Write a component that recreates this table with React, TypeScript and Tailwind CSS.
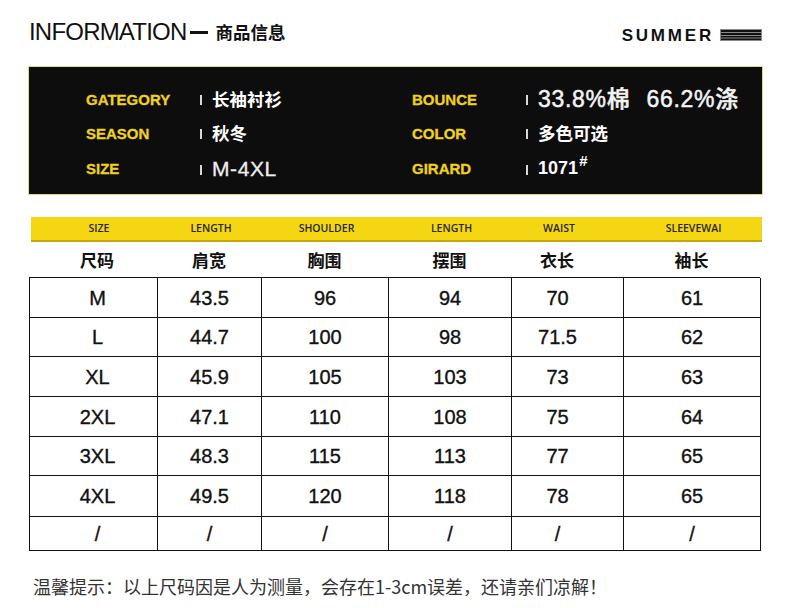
import React from "react";

const sans = '"Liberation Sans", "Noto Sans CJK SC", Arial, sans-serif';
const cjk = '"Noto Sans CJK SC", "Liberation Sans", sans-serif';

const cols = "grid-cols-[128px_104px_127px_123px_112px_137px]";

const headEn = ["SIZE", "LENGTH", "SHOULDER", "LENGTH", "WAIST", "SLEEVEWAI"];
const headZh = ["尺码", "肩宽", "胸围", "摆围", "衣长", "袖长"];
const rows: { h: number; v: string[] }[] = [
  { h: 40, v: ["M", "43.5", "96", "94", "70", "61"] },
  { h: 39, v: ["L", "44.7", "100", "98", "71.5", "62"] },
  { h: 40, v: ["XL", "45.9", "105", "103", "73", "63"] },
  { h: 40, v: ["2XL", "47.1", "110", "108", "75", "64"] },
  { h: 39, v: ["3XL", "48.3", "115", "113", "77", "65"] },
  { h: 41, v: ["4XL", "49.5", "120", "118", "78", "65"] },
  { h: 34, v: ["/", "/", "/", "/", "/", "/"] },
];

const shift = ["pl-[8px]", "", "", "", "pr-[20px]", ""];

function Sep() {
  return (
    <div className="flex items-center h-full">
      <div className="w-[2px] h-[10px] bg-[#d8d8d8] mt-[2px]" />
    </div>
  );
}

function Label({ children }: { children: React.ReactNode }) {
  return (
    <div
      className="text-[15px] font-bold text-[#efd11e] leading-none flex items-center h-full [-webkit-text-stroke:0.3px_#efd11e]"
      style={{ fontFamily: sans }}
    >
      {children}
    </div>
  );
}

export default function App() {
  return (
    <div className="w-[790px] h-[608px] bg-white overflow-hidden" style={{ fontFamily: sans }}>
      {/* header */}
      <div className="pt-[20px] flex items-start justify-between pl-[29px] pr-[28px] h-[46px]">
        <div className="flex items-center h-[24px]">
          <span
            className="text-[24px] leading-[24px] tracking-[-0.8px] text-[#111]"
            style={{ fontFamily: sans }}
          >
            INFORMATION
          </span>
          <span className="inline-block w-[18px] h-[3px] bg-[#111] ml-[4px] mt-[1px]" />
          <span
            className="ml-[7px] text-[17.5px] font-bold leading-none text-[#111]"
            style={{ fontFamily: cjk }}
          >
            商品信息
          </span>
        </div>
        <div className="flex items-center h-[24px] mt-[3px]">
          <span className="text-[17px] font-bold tracking-[2.8px] leading-none text-[#111]">
            SUMMER
          </span>
          <svg width="42" height="12" viewBox="0 0 42 12" className="ml-[6px]">
            <rect x="0" y="0" width="42" height="12" fill="#8a8a8a" />
            <rect x="1" y="1" width="40" height="2" fill="#111" />
            <rect x="1" y="4" width="40" height="2" fill="#111" />
            <rect x="1" y="7" width="40" height="1.5" fill="#111" />
            <rect x="1" y="9.5" width="40" height="1.5" fill="#111" />
          </svg>
        </div>
      </div>

      {/* black info box */}
      <div className="ml-[28px] w-[735px] h-[129px] bg-[#0d0d0d] border border-[#e3d67c] mt-[20px] pt-[15px]">
        <div className="grid grid-cols-[57px_114px_12px_200px_114px_12px_1fr] auto-rows-[34px] text-white">
          <div />
          <Label>GATEGORY</Label>
          <Sep />
          <div className="flex items-center text-[17.5px] font-bold" style={{ fontFamily: cjk }}>
            长袖衬衫
          </div>
          <Label>BOUNCE</Label>
          <Sep />
          <div className="flex items-center text-[23px] tracking-[0.7px] font-medium text-[#f4f4f4] leading-none [-webkit-text-stroke:0.5px_#f4f4f4]">
            <span>33.8%棉</span>
            <span className="ml-[16px]">66.2%涤</span>
          </div>

          <div />
          <Label>SEASON</Label>
          <Sep />
          <div className="flex items-center text-[17.5px] font-bold" style={{ fontFamily: cjk }}>
            秋冬
          </div>
          <Label>COLOR</Label>
          <Sep />
          <div className="flex items-center text-[17.5px] font-bold" style={{ fontFamily: cjk }}>
            多色可选
          </div>

          <div />
          <div className="pt-[3px] h-full">
            <Label>SIZE</Label>
          </div>
          <div className="pt-[3px] h-full">
            <Sep />
          </div>
          <div className="flex items-center pt-[3px] text-[21px] tracking-[0.6px] text-[#eeeeee] leading-none [-webkit-text-stroke:0.3px_#eeeeee]">
            M-4XL
          </div>
          <div className="pt-[3px] h-full">
            <Label>GIRARD</Label>
          </div>
          <div className="pt-[3px] h-full">
            <Sep />
          </div>
          <div className="flex items-center pt-[1px] text-[18px] font-bold leading-none">
            1071<span className="text-[15px] relative -top-[7px] ml-[1px] italic">#</span>
          </div>
        </div>
      </div>

      {/* yellow header */}
      <div
        className={`ml-[31px] w-[731px] h-[25px] mt-[22px] bg-[#f4d712] border-b-2 border-[#c9a50c] grid ${cols}`}
      >
        {headEn.map((t, i) => (
          <div
            key={i}
            className={`flex items-center justify-center text-[10.5px] font-semibold text-[#262626] ${shift[i]}`}
            style={{ fontFamily: '"Open Sans", "Liberation Sans", sans-serif' }}
          >
            {t}
          </div>
        ))}
      </div>

      {/* chinese header */}
      <div className={`ml-[29px] w-[731px] h-[35px] grid ${cols}`}>
        {headZh.map((t, i) => (
          <div
            key={i}
            className={`flex items-center justify-center text-[17px] font-bold text-[#111] ${shift[i]}`}
            style={{ fontFamily: cjk }}
          >
            {t}
          </div>
        ))}
      </div>

      {/* table */}
      <div className="ml-[29px] w-[731px] border-t border-l border-[#111]">
        {rows.map((r, ri) => (
          <div key={ri} className={`grid ${cols}`} style={{ height: r.h }}>
            {r.v.map((v, ci) => (
              <div
                key={ci}
                className={`border-r border-b border-[#111] flex items-center justify-center text-[20px] text-[#111] [-webkit-text-stroke:0.35px_#111] ${shift[ci]}`}
              >
                {v}
              </div>
            ))}
          </div>
        ))}
      </div>

      {/* footer */}
      <div
        className="ml-[33px] mt-[23px] text-[18px] leading-[24px] text-[#333]"
        style={{ fontFamily: cjk }}
      >
        温馨提示：以上尺码因是人为测量，会存在1-3cm误差，还请亲们凉解！
      </div>
    </div>
  );
}
